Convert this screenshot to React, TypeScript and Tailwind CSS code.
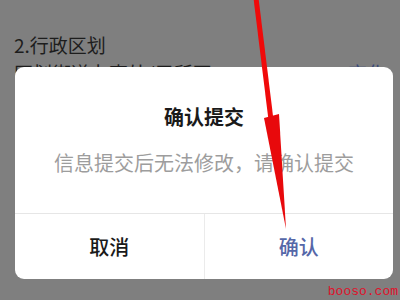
export default function App() {
  return (
    <div
      className="relative h-[300px] w-[400px] overflow-hidden bg-[#7f7f7f]"
      style={{ fontFamily: '"Noto Sans CJK SC", "Noto Sans", sans-serif' }}
    >
      {/* page behind the mask */}
      <div className="px-[14px] pt-[32px] text-[19px] leading-[26px] text-[#1d1d1d]">
        <div>2.行政区划</div>
        <div className="mt-[2px] flex justify-between">
          <span>区划街道办事处/居所区</span>
          <span className="text-[#3a4a7a]">变化</span>
        </div>
      </div>

      {/* dialog */}
      <div className="absolute left-[15px] top-[67px] flex h-[212px] w-[378px] flex-col overflow-hidden rounded-[9px] bg-white">
        <div className="flex flex-1 flex-col items-center">
          <div className="mt-[37px] text-[20px] font-bold leading-[26px] text-[#1a1a1a]">确认提交</div>
          <div className="mt-[20px] text-[20px] leading-[26px] text-[#9d9d9d]">信息提交后无法修改，请确认提交</div>
        </div>
        <div className="flex h-[66px] border-t border-[#e6e6e6]">
          <div className="flex flex-1 items-center justify-center text-[20px] font-medium text-[#1a1a1a]">取消</div>
          <div className="w-px bg-[#ebebeb]" />
          <div className="flex flex-1 items-center justify-center text-[20px] font-medium text-[#5567a8]">确认</div>
        </div>
      </div>

      {/* red annotation arrow */}
      <svg className="absolute left-0 top-0" width="400" height="300" viewBox="0 0 400 300">
        <line x1="256" y1="-2" x2="271" y2="120" stroke="#f00a0a" strokeWidth="5" />
        <polygon points="264,118 279,114 286,229" fill="#e8090c" />
      </svg>

      <div
        className="absolute right-[2px] top-[284px] text-[13px] leading-[16px] text-[#e0102a]"
        style={{ fontFamily: '"Liberation Mono", monospace' }}
      >
        booso.com
      </div>
    </div>
  );
}
